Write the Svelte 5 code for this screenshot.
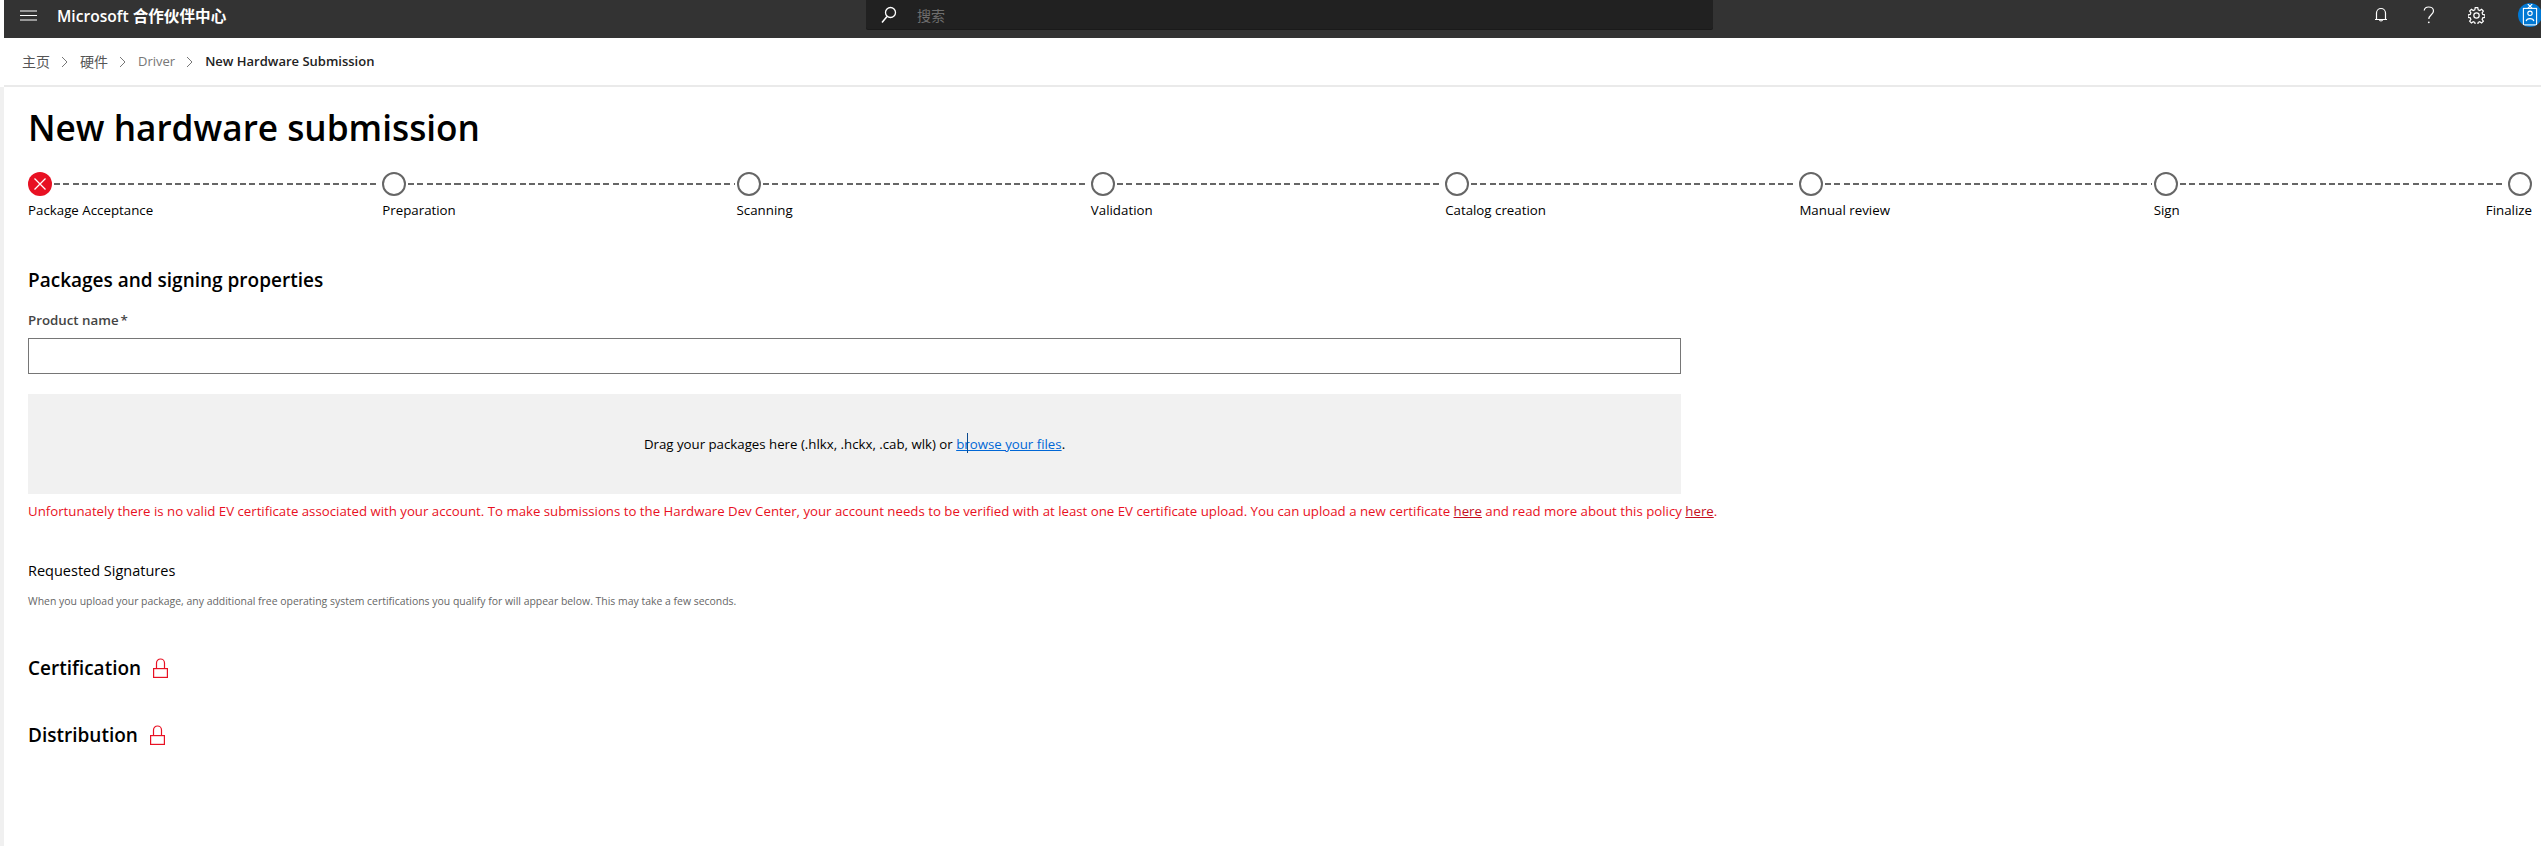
<script>
  const crumbs = ['主页', '硬件', 'Driver'];
  const steps = [
    'Package Acceptance',
    'Preparation',
    'Scanning',
    'Validation',
    'Catalog creation',
    'Manual review',
    'Sign',
    'Finalize'
  ];
  const locked = ['Certification', 'Distribution'];
</script>

<div class="shell">
  <header class="topbar">
    <div class="brand">
      <svg class="burger" width="17" height="11" viewBox="0 0 17 11" aria-hidden="true">
        <path d="M0 1h17M0 5.5h17M0 10h17" stroke="#fff" stroke-width="1" fill="none" />
      </svg>
      <span class="brand-name">Microsoft 合作伙伴中心</span>
    </div>
    <div class="search">
      <svg width="16" height="18" viewBox="0 0 16 18" aria-hidden="true">
        <circle cx="9.5" cy="6.5" r="5" stroke="#fff" stroke-width="1.3" fill="none" />
        <path d="M6 10.5 1 16.5" stroke="#fff" stroke-width="1.5" fill="none" />
      </svg>
      <span class="search-text">搜索</span>
    </div>
    <div class="tools">
      <svg class="bell" width="14" height="16" viewBox="0 0 14 16" aria-hidden="true">
        <path d="M1 12.5h12M2.5 12.5V6a4.5 4.5 0 0 1 9 0v6.5M5.5 12.5a1.5 1.5 0 0 0 3 0" stroke="#fff" stroke-width="1.2" fill="none" />
      </svg>
      <svg class="help" width="12" height="18" viewBox="0 0 12 18" aria-hidden="true">
        <path d="M1.2 4.5C1.5 2.3 3.3 1 5.6 1 8.200 1 10.500 2.500 10.500 5c0 3.600-4.700 3.900-4.700 8" stroke="#fff" stroke-width="1.200" fill="none" />
        <circle cx="5.800" cy="16.300" r="0.900" fill="#fff" />
      </svg>
      <svg class="gear" width="17" height="17" viewBox="0 0 24 24" aria-hidden="true">
        <path d="M10.200 1h3.600l.6 3.100 2.200.9 2.600-1.800 2.500 2.500-1.800 2.600.9 2.200 3.100.6v3.600l-3.100.6-.9 2.200 1.800 2.600-2.500 2.500-2.600-1.800-2.200.9-.6 3.100h-3.600l-.6-3.100-2.200-.9-2.600 1.800-2.500-2.500 1.800-2.600-.9-2.200-3.100-.6v-3.600l3.100-.6.9-2.200-1.800-2.600 2.500-2.500 2.600 1.800 2.200-.9z" stroke="#fff" stroke-width="1.700" fill="none" />
        <circle cx="12" cy="12" r="3.800" stroke="#fff" stroke-width="1.700" fill="none" />
      </svg>
      <span class="avatar">
        <svg width="16" height="22" viewBox="0 0 14 20" aria-hidden="true">
          <rect x="1" y="4" width="12" height="15" stroke="#fff" stroke-width="1" fill="none" />
          <circle cx="7" cy="8.500" r="2" stroke="#fff" stroke-width="1" fill="none" />
          <path d="M3.500 15.500C4 12.500 10 12.500 10.500 15.500M5 0l4 4M9 0 5 4" stroke="#fff" stroke-width="1" fill="none" />
        </svg>
      </span>
    </div>
  </header>

  <nav class="crumbs">
    {#each crumbs as crumb, i}
      <span class="crumb" class:latin={i === 2}>{crumb}</span>
      <svg class="sep" width="7" height="12" viewBox="0 0 7 12" aria-hidden="true">
        <path d="M1 1l5 5-5 5" stroke="#777" stroke-width="1" fill="none" />
      </svg>
    {/each}
    <span class="crumb current">New Hardware Submission</span>
  </nav>

  <main class="page">
    <h1>New hardware submission</h1>

    <ol class="stepper">
      {#each steps as step, i}
        <li class="step">
          <div class="node-row">
            {#if i === 0}
              <span class="node failed">
                <svg width="14" height="14" viewBox="0 0 14 14" aria-hidden="true">
                  <path d="M1.500 1.500l11 11M12.500 1.500l-11 11" stroke="#fff" stroke-width="1.300" fill="none" />
                </svg>
              </span>
            {:else}
              <span class="node"></span>
            {/if}
            {#if i < steps.length - 1}
              <span class="dashes"></span>
            {/if}
          </div>
          <span class="step-label">{step}</span>
        </li>
      {/each}
    </ol>

    <h2>Packages and signing properties</h2>

    <label class="field-label" for="product-name">Product name<span class="req">*</span></label>
    <input id="product-name" class="field" type="text" />

    <div class="dropzone">
      <span>Drag your packages here (.hlkx, .hckx, .cab, wlk) or
        <a class="browse" href="#browse">browse your files<span class="ibeam"></span></a>.</span>
    </div>

    <p class="error">
      Unfortunately there is no valid EV certificate associated with your account. To make submissions to the Hardware Dev Center, your account needs to be verified with at least one EV certificate upload. You can upload a new certificate <a href="#cert">here</a> and read more about this policy <a href="#policy">here</a>.
    </p>

    <h3>Requested Signatures</h3>
    <p class="hint">When you upload your package, any additional free operating system certifications you qualify for will appear below. This may take a few seconds.</p>

    {#each locked as title}
      <div class="locked">
        <span class="locked-title">{title}</span>
        <svg width="15" height="20" viewBox="0 0 15 20" aria-hidden="true">
          <path d="M3.500 11V5a4 4 0 0 1 8 0v6" stroke="#e81123" stroke-width="1.200" fill="none" />
          <rect x="0.600" y="10.600" width="13.800" height="8.800" stroke="#e81123" stroke-width="1.200" fill="none" />
        </svg>
      </div>
    {/each}
  </main>
</div>

<style>
  :global(body) {
    margin: 0;
    background: #fff;
  }

  .shell {
    --ui: "Open Sans", "Noto Sans CJK SC", sans-serif;
    width: 2541px;
    height: 846px;
    overflow: hidden;
    font-family: var(--ui);
    color: #000;
  }

  .topbar {
    display: grid;
    grid-template-columns: 862px 847px 1fr;
    height: 38px;
    margin-left: 4px;
    background: #333;
  }

  .brand {
    display: flex;
    align-items: center;
    height: 30px;
    padding-left: 16px;
  }

  .burger {
    flex: none;
  }

  .brand-name {
    margin-left: 20px;
    font-size: 15.600px;
    font-weight: 600;
    color: #fff;
    white-space: nowrap;
  }

  .search {
    display: flex;
    align-items: center;
    gap: 20px;
    height: 29px;
    padding-left: 15px;
    box-sizing: border-box;
    background: #212121;
    border-radius: 0 0 2px 2px;
    box-shadow: 0 1px 0 #1a1a1a;
  }

  .search-text {
    font-size: 14px;
    color: #6e6e6e;
  }

  .tools {
    display: flex;
    align-items: center;
    height: 30px;
    padding-left: 661px;
  }

  .bell {
    flex: none;
  }

  .help {
    flex: none;
    margin-left: 35px;
  }

  .gear {
    flex: none;
    margin-left: 33px;
  }

  .avatar {
    flex: none;
    display: flex;
    align-items: center;
    justify-content: center;
    width: 24px;
    height: 24px;
    margin-left: 33px;
    border-radius: 50%;
    background: #0078d4;
    overflow: hidden;
  }

  .crumbs {
    display: flex;
    align-items: center;
    box-sizing: content-box;
    height: 45px;
    margin-left: 4px;
    padding: 0 0 2px 18px;
    font-size: 14px;
    color: #555;
    border-bottom: 2px solid #eaeaea;
  }

  .sep {
    margin: 2px 12px 0 11px;
  }

  .crumb.latin {
    font-size: 13px;
    color: #777;
  }

  .crumb.current {
    font-size: 13px;
    font-weight: 600;
    color: #222;
  }

  .page {
    height: 759px;
    box-sizing: border-box;
    padding: 16px 9px 0 24px;
    border-left: 4px solid #f0f0f0;
  }

  h1 {
    margin: 0;
    font-size: 35.200px;
    font-weight: 600;
    line-height: 48px;
  }

  .stepper {
    display: flex;
    margin: 21px 0 0;
    padding: 0;
    list-style: none;
  }

  .step {
    flex: 1;
    min-width: 0;
  }

  .step:last-child {
    flex: 0 0 24px;
    display: flex;
    flex-direction: column;
    align-items: flex-end;
  }

  .node-row {
    display: flex;
    align-items: center;
    height: 24px;
  }

  .node {
    flex: none;
    display: flex;
    align-items: center;
    justify-content: center;
    width: 24px;
    height: 24px;
    box-sizing: border-box;
    border: 2px solid #666;
    border-radius: 50%;
    background: #fff;
  }

  .node.failed {
    border: none;
    background: #e81123;
  }

  .dashes {
    flex: 1;
    height: 2px;
    margin: 0 2px;
    background: repeating-linear-gradient(90deg, #666 0 6px, transparent 6px 9.300px);
  }

  .step-label {
    display: block;
    margin-top: 4px;
    font-size: 13.300px;
    line-height: 20px;
    white-space: nowrap;
  }

  h2 {
    margin: 47px 0 0;
    font-size: 19px;
    font-weight: 600;
    line-height: 26px;
  }

  .field-label {
    display: block;
    margin-top: 17px;
    font-size: 13.300px;
    font-weight: 600;
    line-height: 20px;
    color: #444;
  }

  .req {
    margin-left: 2px;
  }

  .field {
    display: block;
    width: 1653px;
    height: 36px;
    margin-top: 8px;
    box-sizing: border-box;
    border: 1px solid #767676;
    background: #fff;
    outline: none;
  }

  .dropzone {
    display: flex;
    align-items: center;
    justify-content: center;
    width: 1653px;
    height: 100px;
    margin-top: 20px;
    font-size: 13.250px;
    background: #f1f1f1;
  }

  .browse {
    position: relative;
    color: #0067d6;
  }

  .ibeam {
    position: absolute;
    left: 11px;
    top: -2px;
    width: 1px;
    height: 20px;
    background: #0b4a8f;
  }

  .error {
    margin: 7px 0 0;
    font-size: 13.240px;
    line-height: 20px;
    color: #e81123;
    white-space: nowrap;
  }

  .error a {
    color: #c50f1f;
  }

  h3 {
    margin: 40px 0 0;
    font-size: 14.500px;
    font-weight: 400;
    line-height: 20px;
  }

  .hint {
    margin: 12px 0 0;
    font-size: 10.450px;
    line-height: 16px;
    color: #666;
    white-space: nowrap;
  }

  .locked {
    display: flex;
    align-items: center;
    gap: 12px;
    height: 26px;
    margin-top: 41px;
  }

  .hint + .locked {
    margin-top: 46px;
  }

  .locked-title {
    font-size: 19px;
    font-weight: 600;
  }
</style>
